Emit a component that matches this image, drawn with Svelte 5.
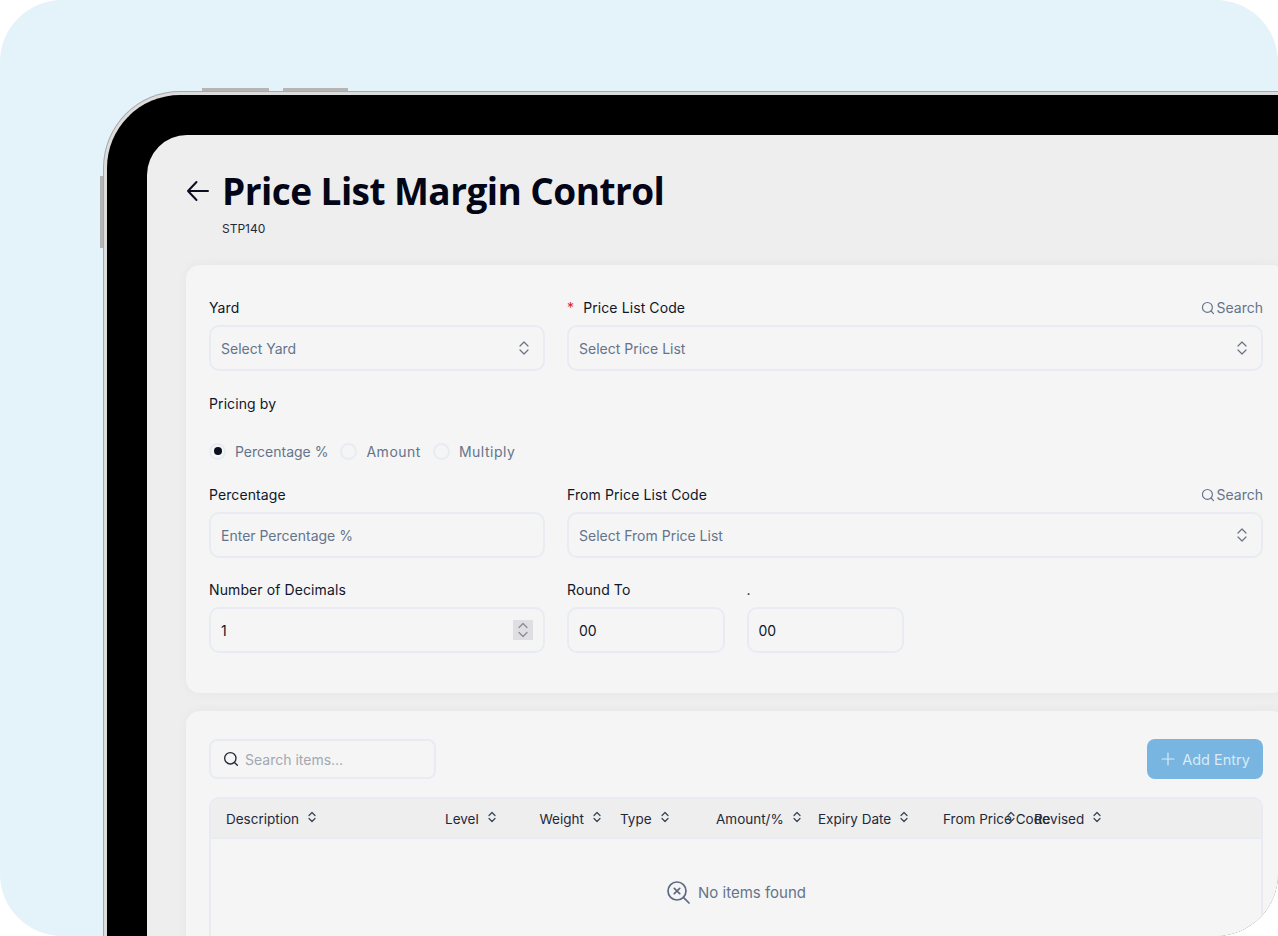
<script>
const columns = [
  { label: 'Description', width: 219 },
  { label: 'Level', width: 94.5 },
  { label: 'Weight', width: 80.5 },
  { label: 'Type', width: 96 },
  { label: 'Amount/%', width: 102 },
  { label: 'Expiry Date', width: 125 },
  // this header's text runs out of its cell, the sort icon sits on top of it
  { label: 'From Price Code', width: 91, textWidth: 55 },
  { label: 'Revised', width: 120 }
]
</script>

<div class="backdrop">
  <div class="device">
    <span class="side-btn top-a"></span>
    <span class="side-btn top-b"></span>
    <span class="side-btn left-a"></span>
    <div class="screen">
      <header class="page-head">
        <svg class="back" viewBox="0 0 24 24" width="24" height="24" fill="none" stroke="currentColor" stroke-width="2" stroke-linecap="round" stroke-linejoin="round">
          <path d="M22 12H2M10.5 3L2 12l8.500 9" />
        </svg>
        <div>
          <h1>Price List Margin Control</h1>
          <p class="code">STP140</p>
        </div>
      </header>

      <section class="card form">
        <div class="row top">
          <div class="field narrow">
            <div class="label-row"><label for="yard">Yard</label></div>
            <div class="box" id="yard">
              <span class="placeholder">Select Yard</span>
              {@render updown()}
            </div>
          </div>
          <div class="field wide">
            <div class="label-row">
              <span class="label"><span class="req">*</span>Price List Code</span>
              {@render searchLink()}
            </div>
            <div class="box">
              <span class="placeholder">Select Price List</span>
              {@render updown()}
            </div>
          </div>
        </div>

        <div class="pricing-label">Pricing by</div>
        <div class="radios">
          <span class="radio checked"></span><span class="radio-text">Percentage %</span>
          <span class="radio"></span><span class="radio-text loose">Amount</span>
          <span class="radio"></span><span class="radio-text loose">Multiply</span>
        </div>

        <div class="row second">
          <div class="field narrow">
            <div class="label-row"><span class="label">Percentage</span></div>
            <div class="box"><span class="placeholder">Enter Percentage %</span></div>
          </div>
          <div class="field wide">
            <div class="label-row">
              <span class="label">From Price List Code</span>
              {@render searchLink()}
            </div>
            <div class="box">
              <span class="placeholder">Select From Price List</span>
              {@render updown()}
            </div>
          </div>
        </div>

        <div class="row third">
          <div class="field narrow">
            <div class="label-row"><span class="label">Number of Decimals</span></div>
            <div class="box">
              <span class="value">1</span>
              <span class="spinner">
                <svg viewBox="0 0 20 20" width="20" height="20" fill="none" stroke="#8b8b93" stroke-width="1.3" stroke-linecap="round" stroke-linejoin="round">
                  <path d="M6 7.5L10 3.5l4 4M6 12.5l4 4 4-4" />
                </svg>
              </span>
            </div>
          </div>
          <div class="field round">
            <div class="label-row"><span class="label">Round To</span></div>
            <div class="box"><span class="value">00</span></div>
          </div>
          <div class="field round">
            <div class="label-row"><span class="label">.</span></div>
            <div class="box"><span class="value">00</span></div>
          </div>
        </div>
      </section>

      <section class="card list">
        <div class="toolbar">
          <div class="search-box">
            <svg viewBox="0 0 24 24" width="16" height="16" fill="none" stroke="#1f2937" stroke-width="2" stroke-linecap="round">
              <circle cx="11" cy="11" r="8.5" /><path d="M21.5 21.5l-4.300-4.300" />
            </svg>
            <span>Search items...</span>
          </div>
          <button class="add">
            <svg viewBox="0 0 24 24" width="16" height="16" fill="none" stroke="currentColor" stroke-width="1.8" stroke-linecap="round">
              <path d="M12 3v18M3 12h18" />
            </svg>
            Add Entry
          </button>
        </div>

        <div class="table">
          <div class="thead">
            {#each columns as col}
              <div class="th" style="width: {col.width}px">
                <span class="th-text" style={col.textWidth ? `width: ${col.textWidth}px` : undefined}>{col.label}</span>
                {@render sort()}
              </div>
            {/each}
          </div>
          <div class="empty">
            <svg viewBox="0 0 24 24" width="24" height="24" fill="none" stroke="#5b6b82" stroke-width="1.7" stroke-linecap="round">
              <circle cx="11" cy="11" r="9" /><path d="M23 23l-5.600-5.600M8.300 8.300l5.400 5.400M13.700 8.300l-5.400 5.400" />
            </svg>
            <span>No items found</span>
          </div>
        </div>
      </section>
    </div>
  </div>
</div>

{#snippet updown()}
  <svg class="updown" viewBox="0 0 16 16" width="16" height="16" fill="none" stroke="#6b7280" stroke-width="1.2" stroke-linecap="round" stroke-linejoin="round">
    <path d="M4 6L8 2 12 6M4 10L8 14 12 10" />
  </svg>
{/snippet}

{#snippet sort()}
  <svg class="sort" viewBox="0 0 8 12" width="8" height="12" fill="none" stroke="#374151" stroke-width="1.2" stroke-linecap="round" stroke-linejoin="round">
    <path d="M1 4.500L4 1.500 7 4.500M1 7.500L4 10.500 7 7.500" />
  </svg>
{/snippet}

{#snippet searchLink()}
  <span class="search-link">
    <svg viewBox="0 0 24 24" width="14" height="14" fill="none" stroke="#64748b" stroke-width="2" stroke-linecap="round">
      <circle cx="11" cy="11" r="8.5" /><path d="M21.5 21.5l-4.300-4.300" />
    </svg>
    Search
  </span>
{/snippet}

<style>
:global(body) {
  margin: 0;
  background: #fff;
}

.backdrop {
  width: 1278px;
  height: 936px;
  background: #e4f3fa;
  border-radius: 62px;
  overflow: hidden;
  padding: 92px 0 0 104px;
  box-sizing: border-box;
  font-family: Inter, "Liberation Sans", sans-serif;
  color: #0f172a;
}

.device {
  position: relative;
  width: 1300px;
  height: 1000px;
  box-sizing: border-box;
  background: #000;
  border: 3px solid #dcdcdc;
  border-right: 0;
  border-bottom: 0;
  border-radius: 76px 0 0 0;
  box-shadow: 0 0 0 1px #a9a9a9;
  padding: 40px 0 0 40px;
}

.side-btn {
  position: absolute;
  background: #b5b5b5;
}
.top-a { top: -7px; left: 95px; width: 67px; height: 3px; }
.top-b { top: -7px; left: 176px; width: 65px; height: 3px; }
.left-a { top: 81px; left: -7px; width: 3px; height: 72px; }

.screen {
  width: 1300px;
  height: 1000px;
  background: #eeeeee;
  border-radius: 40px 0 0 0;
  padding: 35px 0 0 39px;
  box-sizing: border-box;
}

.page-head {
  display: flex;
  gap: 12px;
  height: 95px;
}

.back {
  color: #0a0f20;
  margin-top: 9px;
  flex: none;
}

h1 {
  margin: 0;
  font-family: "Open Sans", sans-serif;
  font-size: 37px;
  font-weight: 700;
  line-height: 42px;
  letter-spacing: -0.55px;
  color: #020617;
}

.code {
  margin: 9px 0 0;
  font-size: 12px;
  line-height: 16px;
  color: #1e293b;
}

.card {
  width: 1100px;
  background: #f5f5f5;
  border-radius: 14px;
  box-sizing: border-box;
  box-shadow: 0 0 12px rgba(0, 0, 0, 0.04);
}

.form {
  height: 428px;
  padding: 32px 0 0 23px;
}

.row {
  display: flex;
  gap: 22px;
}

.field.narrow { width: 336px; }
.field.wide { width: 696px; }
.field.round { width: 157.5px; }

.label-row {
  display: flex;
  justify-content: space-between;
  align-items: center;
  height: 22px;
  margin-bottom: 6px;
}

label,
.label,
.pricing-label {
  font-size: 14px;
  line-height: 22px;
  letter-spacing: 0.1px;
  color: #0f172a;
}

.req {
  color: #e11d2e;
  margin-right: 9px;
}

.search-link {
  display: inline-flex;
  align-items: center;
  gap: 2px;
  font-size: 14px;
  line-height: 20px;
  margin-top: -1px;
  color: #64748b;
}

.box {
  height: 46px;
  border: 2px solid #e8ecf2;
  border-radius: 10px;
  box-sizing: border-box;
  display: flex;
  align-items: center;
  justify-content: space-between;
  padding: 0 11px 0 10px;
  font-size: 14px;
}

.placeholder { color: #64748b; }
.value { color: #0f172a; }

.spinner {
  width: 20px;
  height: 20px;
  background: #dfdfe3;
  margin-right: -1px;
}
.spinner svg { display: block; }

.pricing-label {
  margin-top: 22px;
}

.radios {
  display: flex;
  align-items: center;
  height: 20px;
  margin-top: 26px;
  font-size: 14px;
  color: #64748b;
}

.radio {
  width: 17px;
  height: 17px;
  border: 2px solid #e8ecf2;
  border-radius: 50%;
  box-sizing: border-box;
  display: flex;
  align-items: center;
  justify-content: center;
  margin-right: 9px;
}
.radio.checked::after {
  content: "";
  width: 8px;
  height: 8px;
  border-radius: 50%;
  background: #0a0f20;
}
.radio-text { margin-right: 12px; }
.radio-text.loose { letter-spacing: 0.5px; }

.row.second { margin-top: 23px; }
.row.third { margin-top: 21px; }

.list {
  margin-top: 18px;
  height: 400px;
  padding: 28px 0 0 23px;
}

.toolbar {
  display: flex;
  justify-content: space-between;
  align-items: center;
  width: 1054px;
}

.search-box {
  width: 227px;
  height: 40px;
  box-sizing: border-box;
  border: 2px solid #e8ecf2;
  border-radius: 8px;
  display: flex;
  align-items: center;
  gap: 6px;
  padding-left: 12px;
  font-size: 14px;
  color: #a3a8b1;
}

.add {
  width: 116px;
  height: 40px;
  border: 0;
  border-radius: 8px;
  background: #78b5e0;
  color: #d9ebf7;
  font: inherit;
  font-size: 14.5px;
  display: flex;
  align-items: center;
  justify-content: center;
  gap: 6px;
}

.table {
  width: 1054px;
  height: 300px;
  margin-top: 18px;
  border: 2px solid #e8ecf2;
  border-radius: 10px;
  box-sizing: border-box;
}

.thead {
  height: 40px;
  background: #eeeeee;
  border-bottom: 2px solid #e8ecf2;
  border-radius: 8px 8px 0 0;
  display: flex;
  align-items: center;
  padding-left: 15px;
  box-sizing: border-box;
  font-size: 13.5px;
  color: #1e293b;
}

.th {
  display: flex;
  align-items: center;
  gap: 9px;
  flex: none;
  white-space: nowrap;
}

.th-text {
  line-height: 20px;
  padding-top: 2px;
}

.sort {
  flex: none;
  margin-bottom: 2px;
}

.empty {
  display: flex;
  align-items: center;
  justify-content: center;
  gap: 8px;
  padding-top: 41px;
  font-size: 15px;
  color: #64748b;
}
</style>
